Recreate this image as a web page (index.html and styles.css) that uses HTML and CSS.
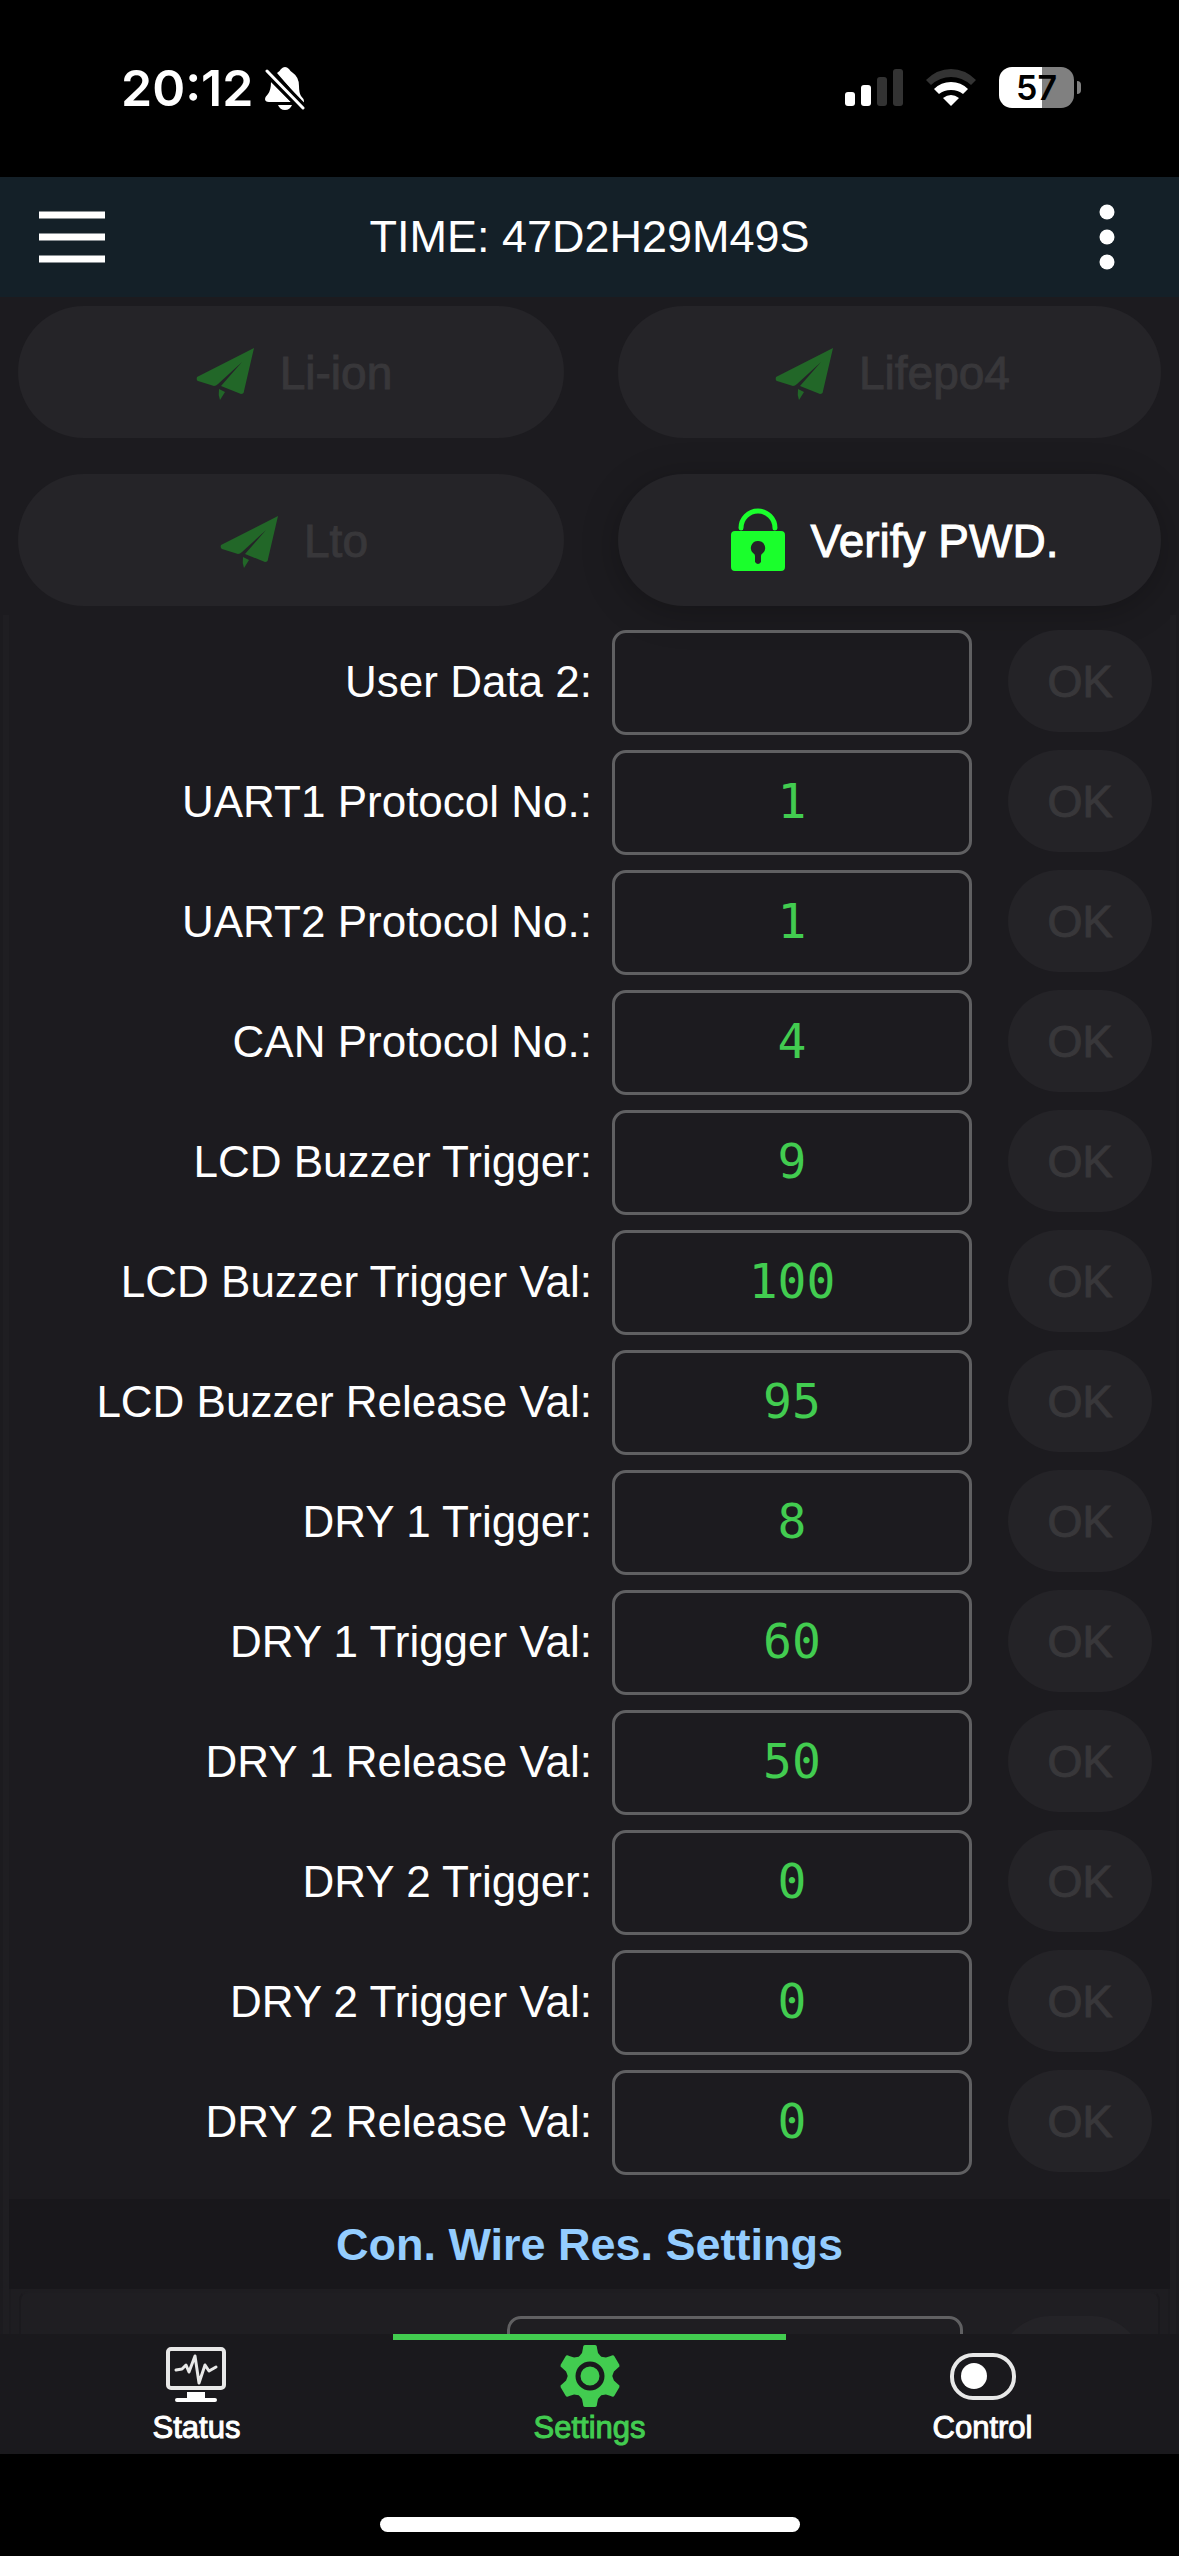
FILE: index.html
```html
<!DOCTYPE html>
<html lang="en">
<head>
<meta charset="utf-8">
<meta name="viewport" content="width=device-width, initial-scale=1">
<title>BMS Settings</title>
<link rel="stylesheet" href="styles.css">
</head>
<body>
<svg class="defs" aria-hidden="true">
  <symbol id="plane" viewBox="0 0 72 72">
    <path d="M64 11 7 40q-1 3 1 4l16 5q2 0 4-2L52 25 31 49l20 8q3 0 3-3Z"/>
    <path d="M29 52l6 3-5 8q-2-5-1-11Z"/>
  </symbol>
</svg>
<div class="screen">
  <div class="status-bar">
    <div class="clock">
      <time>20:12</time>
      <svg class="bell" viewBox="0 0 40 44" aria-label="Silent mode">
        <path fill="#fff" d="M12 6q3-2 4-4 4-4 8 0 1 2 4 4 6 4 6 13 0 7 2 10 3 3 3 5 0 2-1 2zM6 15l20 20H4q-4 0-4-3 0-2 3-5 3-4 3-12zM13 38h14q-2 5-7 5t-7-5Z"/>
        <path d="M2 4l36 37" stroke="#000" stroke-width="9"/>
        <path d="M2 4l36 37" stroke="#fff" stroke-width="3" stroke-linecap="round"/>
      </svg>
    </div>
    <div class="indicators">
      <svg class="signal" viewBox="0 0 58 38" aria-label="Signal">
        <g fill="#fff"><rect y="23" width="10" height="14" rx="3"/><rect x="16" y="16" width="10" height="21" rx="3"/></g>
        <g fill="#333"><rect x="32" y="8" width="10" height="29" rx="3"/><rect x="48" width="10" height="37" rx="3"/></g>
      </svg>
      <svg class="wifi" viewBox="0 0 52 38" aria-label="Wi-Fi">
        <path fill="#333" d="M1 11q11-11 25-11t25 11l-5 5Q37 8 26 8T6 16Z"/>
        <path fill="#fff" d="M9 20q7-7 17-7t17 7l-5 5q-5-4-12-4t-12 4ZM18 29q8-6 16 0l-8 8Z"/>
      </svg>
      <div class="battery"><span class="battery-level">57</span></div>
    </div>
  </div>

  <header class="app-bar">
    <button class="icon-button" type="button" aria-label="Menu">
      <svg class="menu-icon" viewBox="0 0 66 52"><path d="M0 4h66M0 26h66M0 48h66" stroke="#fff" stroke-width="7"/></svg>
    </button>
    <h1 class="title">TIME: 47D2H29M49S</h1>
    <button class="icon-button" type="button" aria-label="More">
      <svg class="more-icon" viewBox="0 0 16 66"><g fill="#fff"><circle cx="8" cy="8" r="7.500"/><circle cx="8" cy="33" r="7.500"/><circle cx="8" cy="58" r="7.500"/></g></svg>
    </button>
  </header>

  <main class="content">
    <div class="actions">
      <button class="pill" type="button" disabled><svg class="pill-icon"><use href="#plane"/></svg>Li-ion</button>
      <button class="pill" type="button" disabled><svg class="pill-icon"><use href="#plane"/></svg>Lifepo4</button>
      <button class="pill" type="button" disabled><svg class="pill-icon"><use href="#plane"/></svg>Lto</button>
      <button class="pill pill-active" type="button">
        <svg class="pill-icon" viewBox="0 0 72 72"><path d="M20 23a17 17 0 0 1 34 0" fill="none" stroke="#1aff2c" stroke-width="5" stroke-linecap="round"/><path fill-rule="evenodd" d="M14 26h46q4 0 4 4v32q0 4-4 4H14q-4 0-4-4V30q0-4 4-4Zm23 10a7 7 0 0 0-5 12q2 1 2 3v6q3 4 6 0v-6q0-2 2-3a7 7 0 0 0-5-12Z"/></svg>Verify PWD.</button>
    </div>

    <section class="panel">
      <form class="rows">
        <div class="row"><label for="f1">User Data 2:</label><input id="f1" type="text" value=""><button type="button" disabled>OK</button></div>
        <div class="row"><label for="f2">UART1 Protocol No.:</label><input id="f2" type="text" value="1"><button type="button" disabled>OK</button></div>
        <div class="row"><label for="f3">UART2 Protocol No.:</label><input id="f3" type="text" value="1"><button type="button" disabled>OK</button></div>
        <div class="row"><label for="f4">CAN Protocol No.:</label><input id="f4" type="text" value="4"><button type="button" disabled>OK</button></div>
        <div class="row"><label for="f5">LCD Buzzer Trigger:</label><input id="f5" type="text" value="9"><button type="button" disabled>OK</button></div>
        <div class="row"><label for="f6">LCD Buzzer Trigger Val:</label><input id="f6" type="text" value="100"><button type="button" disabled>OK</button></div>
        <div class="row"><label for="f7">LCD Buzzer Release Val:</label><input id="f7" type="text" value="95"><button type="button" disabled>OK</button></div>
        <div class="row"><label for="f8">DRY 1 Trigger:</label><input id="f8" type="text" value="8"><button type="button" disabled>OK</button></div>
        <div class="row"><label for="f9">DRY 1 Trigger Val:</label><input id="f9" type="text" value="60"><button type="button" disabled>OK</button></div>
        <div class="row"><label for="f10">DRY 1 Release Val:</label><input id="f10" type="text" value="50"><button type="button" disabled>OK</button></div>
        <div class="row"><label for="f11">DRY 2 Trigger:</label><input id="f11" type="text" value="0"><button type="button" disabled>OK</button></div>
        <div class="row"><label for="f12">DRY 2 Trigger Val:</label><input id="f12" type="text" value="0"><button type="button" disabled>OK</button></div>
        <div class="row"><label for="f13">DRY 2 Release Val:</label><input id="f13" type="text" value="0"><button type="button" disabled>OK</button></div>
      </form>
      <h2 class="section-title">Con. Wire Res. Settings</h2>
      <div class="next-section">
        <div class="next-card">
          <div class="row row-wide"><span></span><input type="text" aria-label="Wire resistance"><button type="button" aria-label="Confirm" disabled></button></div>
        </div>
      </div>
    </section>
  </main>

  <nav class="tabs">
    <a class="tab" href="#status">
      <svg class="tab-icon" viewBox="0 0 66 66" fill="none" stroke="#e8e8e8"><rect x="4" y="6" width="56" height="39" rx="3" stroke-width="4"/><path d="M12 27l6-1 4-4 3 7 6-16 4 27 6-18 4 6 7-4" stroke-width="3" stroke-linecap="round" stroke-linejoin="round"/><path fill="#fff" stroke="none" d="M23 49h18v6h10q2 0 2 2t-2 2H13q-2 0-2-2t2-2h10Z"/></svg>
      Status</a>
    <a class="tab tab-active" href="#settings">
      <svg class="tab-icon" viewBox="-33 -33 66 66" fill="#42cc50">
        <path id="gear-tooth" d="M-5-31H5Q7-31 7-28L8-23 13-17H-13L-8-23-7-28Q-7-31-5-31Z"/>
        <use href="#gear-tooth" transform="rotate(60)"/>
        <use href="#gear-tooth" transform="rotate(120)"/>
        <use href="#gear-tooth" transform="rotate(180)"/>
        <use href="#gear-tooth" transform="rotate(240)"/>
        <use href="#gear-tooth" transform="rotate(300)"/>
        <circle r="22"/>
        <circle r="12" stroke="#1a191d" stroke-width="5"/>
      </svg>
      Settings</a>
    <a class="tab" href="#control">
      <svg class="tab-icon" viewBox="0 0 66 66"><rect x="2" y="12" width="62" height="43" rx="21" fill="none" stroke="#e8e8e8" stroke-width="4"/><circle cx="24" cy="33" r="13" fill="#fff"/></svg>
      Control</a>
  </nav>
  <div class="home-area"><div class="home-indicator"></div></div>
</div>
</body>
</html>
```
FILE: styles.css
```css
* { box-sizing: border-box; }

body {
  margin: 0;
  background: #000;
  color: #fff;
  font-family: "Liberation Sans", Arial, sans-serif;
  font-size: 45px;
}

button, input { font: inherit; margin: 0; }
button { border: 0; padding: 0; }

.defs { position: absolute; width: 0; height: 0; }

.screen {
  display: flex;
  flex-direction: column;
  height: 100vh;
  overflow: hidden;
}

/* Device status bar */
.status-bar {
  flex: none;
  display: flex;
  justify-content: space-between;
  height: 177px;
  padding: 67px 98px 0 121px;
}
.clock { display: flex; gap: 12px; height: 44px; align-items: center; }
.clock time { font: 600 50px/42px Inter, sans-serif; height: 44px; }
.bell { width: 40px; height: 44px; }
.indicators { display: flex; align-items: center; height: 41px; gap: 22px; }
.signal { width: 58px; height: 38px; }
.wifi { width: 52px; height: 38px; }
.battery { display: flex; align-items: center; gap: 3px; }
.battery-level {
  width: 75px;
  height: 41px;
  border-radius: 13px;
  background: linear-gradient(90deg, #fff 57%, #808080 57%);
  color: #000;
  font: 600 34px/41px Inter, sans-serif;
  text-align: center;
}
.battery::after {
  content: "";
  width: 4px;
  height: 13px;
  border-radius: 0 4px 4px 0;
  background: #808080;
}

/* App bar */
.app-bar {
  flex: none;
  display: flex;
  align-items: center;
  justify-content: space-between;
  height: 120px;
  padding: 0 39px;
  background: #142028;
}
.icon-button { display: flex; width: 66px; background: none; justify-content: center; }
.menu-icon { width: 66px; height: 52px; }
.more-icon { width: 16px; height: 66px; }
.title { margin: 0; font-size: 45px; font-weight: 400; }

/* Scrolling content */
.content {
  flex: 1;
  min-height: 0;
  overflow: hidden;
  background: #1c1b1f;
}
.actions {
  display: grid;
  grid-template-columns: 546fr 543fr;
  gap: 36px 54px;
  padding: 9px 18px;
}
.pill {
  display: flex;
  align-items: center;
  justify-content: center;
  gap: 18px;
  height: 132px;
  padding-top: 2px;
  border-radius: 66px;
  background: #252428;
  color: #38373a;
  font-size: 46px;
  -webkit-text-stroke: 1px;
}
.pill-icon { width: 72px; height: 72px; fill: #226728; }
.pill-active { color: #fff; box-shadow: 0 6px 36px rgba(0, 0, 0, 0.25); }
.pill-active .pill-icon { fill: #1aff2c; }

.panel {
  margin: 0 3px;
  border: solid #1f1e22;
  border-width: 0 6px;
}
.rows {
  display: grid;
  gap: 15px;
  padding: 15px 18px 24px;
}
.row {
  display: grid;
  grid-template-columns: 1fr 360px 180px;
  align-items: start;
}
.row label {
  padding-right: 20px;
  font-size: 44px;
  line-height: 104px;
  text-align: right;
}
.row input {
  width: 100%;
  height: 105px;
  padding: 0 0 3px;
  border: 3px solid #606062;
  border-radius: 14px;
  background: none;
  color: #42cc50;
  font: 48px "DejaVu Sans Mono", monospace;
  text-align: center;
}
.row button {
  justify-self: end;
  width: 144px;
  height: 102px;
  padding-top: 2px;
  border-radius: 51px;
  background: #242327;
  color: #38373a;
  -webkit-text-stroke: 1px;
}

.section-title {
  margin: 0;
  padding-top: 2px;
  background: #18171b;
  color: #94cdff;
  font-size: 45px;
  line-height: 88px;
  text-align: center;
}
.next-section {
  padding: 2px 8px 0;
  border: solid #1c1b1f;
  border-width: 0 2px;
  background: #1e1d21;
}
.next-card {
  padding: 23px 15px;
  border: 2px solid #1b1a1e;
  border-top-color: #1e1d21;
  border-radius: 9px 9px 0 0;
  background: #1f1e22;
}
.row-wide { grid-template-columns: 1fr 456px 180px; }

/* Bottom navigation */
.tabs {
  flex: none;
  display: grid;
  grid-template-columns: repeat(3, 1fr);
  height: 120px;
  background: #1a191d;
}
.tab {
  display: flex;
  flex-direction: column;
  align-items: center;
  padding-top: 3px;
  border-top: 6px solid transparent;
  color: #fff;
  font-size: 31px;
  line-height: 38px;
  text-decoration: none;
  -webkit-text-stroke: 1px;
}
.tab-icon { width: 66px; height: 66px; }
.tab-active { border-top-color: #42cc50; color: #42cc50; }

.home-area { flex: none; height: 102px; padding-top: 63px; }
.home-indicator {
  width: 420px;
  height: 15px;
  margin: 0 auto;
  border-radius: 8px;
  background: #fff;
}
```
